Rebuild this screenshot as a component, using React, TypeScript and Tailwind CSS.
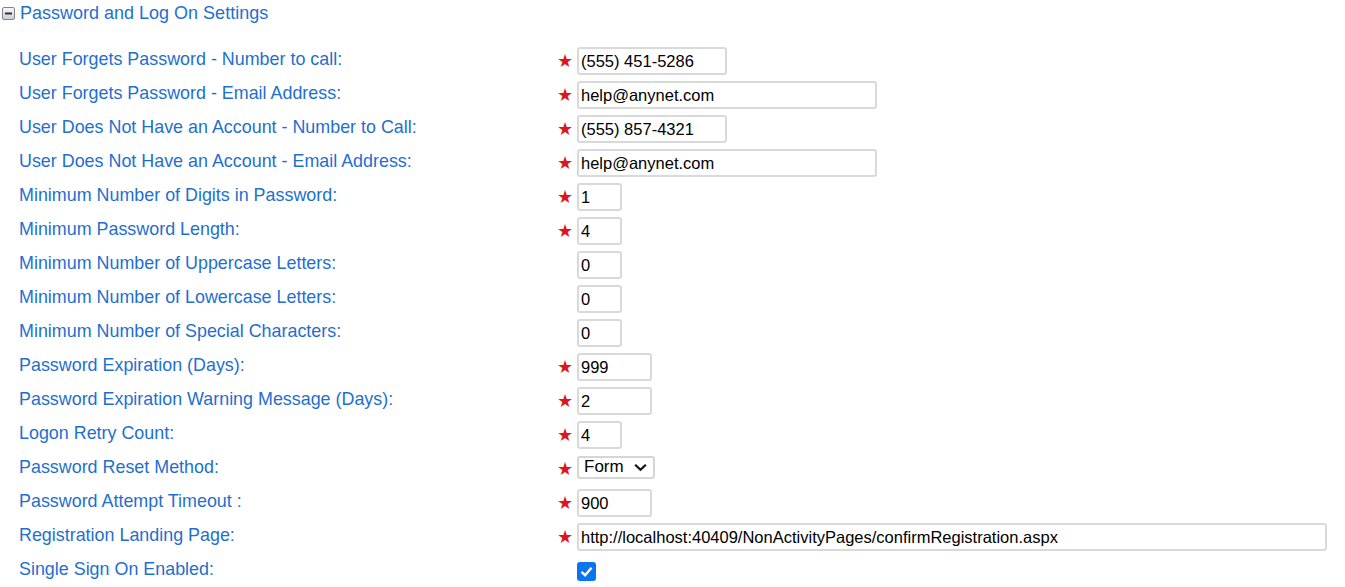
import React from "react";

type Row = {
  label: string;
  required: boolean;
  kind: "text" | "select" | "check";
  value?: string;
  width?: string;
};

const rows: Row[] = [
  { label: "User Forgets Password - Number to call:", required: true, kind: "text", value: "(555) 451-5286", width: "w-[150px]" },
  { label: "User Forgets Password - Email Address:", required: true, kind: "text", value: "help@anynet.com", width: "w-[300px]" },
  { label: "User Does Not Have an Account - Number to Call:", required: true, kind: "text", value: "(555) 857-4321", width: "w-[150px]" },
  { label: "User Does Not Have an Account - Email Address:", required: true, kind: "text", value: "help@anynet.com", width: "w-[300px]" },
  { label: "Minimum Number of Digits in Password:", required: true, kind: "text", value: "1", width: "w-[45px]" },
  { label: "Minimum Password Length:", required: true, kind: "text", value: "4", width: "w-[45px]" },
  { label: "Minimum Number of Uppercase Letters:", required: false, kind: "text", value: "0", width: "w-[45px]" },
  { label: "Minimum Number of Lowercase Letters:", required: false, kind: "text", value: "0", width: "w-[45px]" },
  { label: "Minimum Number of Special Characters:", required: false, kind: "text", value: "0", width: "w-[45px]" },
  { label: "Password Expiration (Days):", required: true, kind: "text", value: "999", width: "w-[75px]" },
  { label: "Password Expiration Warning Message (Days):", required: true, kind: "text", value: "2", width: "w-[75px]" },
  { label: "Logon Retry Count:", required: true, kind: "text", value: "4", width: "w-[45px]" },
  { label: "Password Reset Method:", required: true, kind: "select", value: "Form" },
  { label: "Password Attempt Timeout :", required: true, kind: "text", value: "900", width: "w-[75px]" },
  { label: "Registration Landing Page:", required: true, kind: "text", value: "http://localhost:40409/NonActivityPages/confirmRegistration.aspx", width: "w-[750px]" },
  { label: "Single Sign On Enabled:", required: false, kind: "check" },
];

function CollapseIcon() {
  return (
    <svg width="13" height="13" viewBox="0 0 13 13" className="shrink-0">
      <defs>
        <linearGradient id="cg" x1="0" y1="0" x2="0" y2="1">
          <stop offset="0" stopColor="#fafafa" />
          <stop offset="1" stopColor="#c9cdd2" />
        </linearGradient>
      </defs>
      <rect x="0.5" y="0.5" width="12" height="12" rx="1.5" fill="url(#cg)" stroke="#7d848c" />
      <rect x="3" y="5.5" width="7" height="2" fill="#2d3136" />
    </svg>
  );
}

function Field({ row }: { row: Row }) {
  if (row.kind === "select") {
    return (
      <div className="mb-[4px] flex h-[23px] w-[78px] items-center justify-between rounded-[3px] border-2 border-[#d6d6d6] bg-white pl-[5px] pr-[6px] text-[17px] text-black">
        <span>{row.value}</span>
        <svg width="13" height="9" viewBox="0 0 13 9">
          <path d="M1.2 1.8l5.3 5 5.3-5" fill="none" stroke="#111" strokeWidth="2.2" />
        </svg>
      </div>
    );
  }
  if (row.kind === "check") {
    return (
      <div className="flex h-[19px] w-[19px] items-center justify-center rounded-[3px] bg-[#0b75ef]">
        <svg width="13" height="11" viewBox="0 0 13 11">
          <path d="M1.5 5.8l3.6 3.4L11.5 1.8" fill="none" stroke="#fff" strokeWidth="2.4" />
        </svg>
      </div>
    );
  }
  return (
    <input
      readOnly
      value={row.value}
      className={`${row.width} h-[28px] rounded-[3px] border-2 border-[#d9d9d9] bg-white px-[2px] text-[16.5px] text-black outline-none`}
    />
  );
}

export default function App() {
  return (
    <div className="min-h-[587px] bg-white font-['Liberation_Sans',Arial,sans-serif] text-[#1f6fcf]">
      <div className="flex h-[26px] items-center gap-[5px] pl-[2px] pt-[1px]">
        <CollapseIcon />
        <span className="text-[18px]">Password and Log On Settings</span>
      </div>
      <div className="grid grid-cols-[538px_20px_auto] pl-[19px] pt-[18px]">
        {rows.map((row) => (
          <React.Fragment key={row.label}>
            <div className="flex h-[34px] items-center pb-[4px] text-[17.9px]">{row.label}</div>
            <div className="flex h-[34px] items-center text-[18px] text-[#e0141c]">
              {row.required ? "★" : ""}
            </div>
            <div className="flex h-[34px] items-center">
              <Field row={row} />
            </div>
          </React.Fragment>
        ))}
      </div>
    </div>
  );
}
